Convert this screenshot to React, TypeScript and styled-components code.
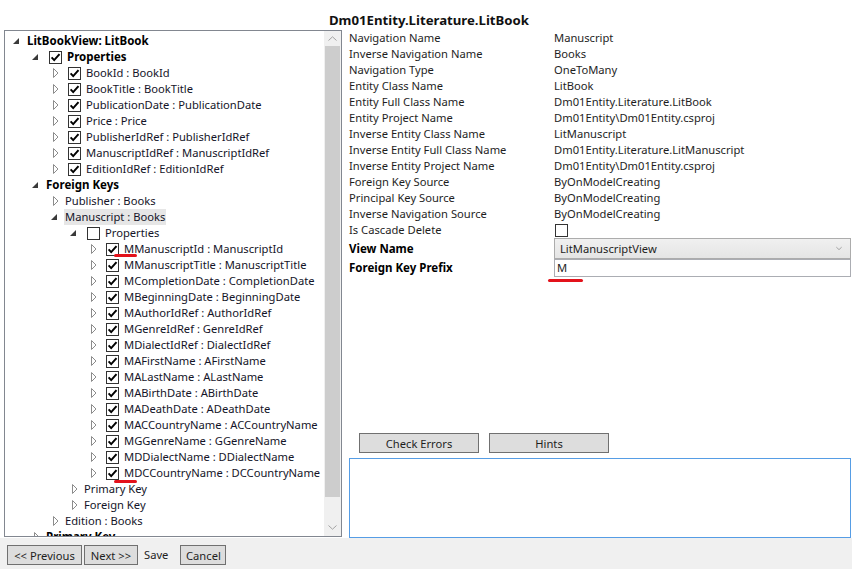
import React from 'react';
import styled, { createGlobalStyle } from 'styled-components';

const Global = createGlobalStyle`
  html, body { margin: 0; padding: 0; background: #ffffff; }
  body {
    font-family: "Noto Sans", "Open Sans", sans-serif;
    font-size: 11.2px;
    color: #1e1e1e;
  }
  * { box-sizing: border-box; }
`;

const Window = styled.div`
  width: 852px;
  height: 569px;
  display: flex;
  flex-direction: column;
  background: #ffffff;
  overflow: hidden;
`;

const Title = styled.div`
  height: 30px;
  padding-top: 11px;
  padding-left: 6px;
  line-height: 19px;
  text-align: center;
  font-weight: 700;
  font-size: 13.2px;
  color: #111;
`;

const Main = styled.div`
  display: flex;
  height: 508px;
`;

const TreeBox = styled.div`
  margin-left: 4px;
  width: 338px;
  height: 507px;
  border: 1px solid #828790;
  display: flex;
  background: #fff;
`;

const TreeContent = styled.div`
  flex: 1;
  overflow: hidden;
  padding-top: 2px;
`;

const Row = styled.div<{ $level: number }>`
  height: 16px;
  display: flex;
  align-items: center;
  padding-left: ${(p) => 5 + p.$level * 19}px;
  white-space: nowrap;
`;

const Expander = styled.div<{ $open: boolean }>`
  width: 17px;
  height: 16px;
  display: flex;
  align-items: center;
  padding-left: ${(p) => (p.$open ? 3 : 5)}px;
  flex-shrink: 0;
`;

const Check = styled.div`
  width: 13px;
  height: 13px;
  margin-left: 3px;
  margin-right: 5px;
  border: 1px solid #333333;
  background: #fff;
  flex-shrink: 0;
  display: flex;
  align-items: center;
  justify-content: center;
`;

const NodeText = styled.span<{ $bold?: boolean; $hl?: boolean }>`
  position: relative;
  font-weight: ${(p) => (p.$bold ? 700 : 400)};
  font-size: ${(p) => (p.$bold ? '11.5px' : '11.2px')};
  color: ${(p) => (p.$bold ? '#000' : '#141428')};
  background: ${(p) => (p.$hl ? '#e6e6e6' : 'transparent')};
  line-height: 16px;
  padding: 0 1px;
  margin-left: -1px;
`;

const RedMark = styled.span<{ $top: number; $left: number; $width: number }>`
  position: absolute;
  left: ${(p) => p.$left}px;
  top: ${(p) => p.$top}px;
  width: ${(p) => p.$width}px;
  height: 3px;
  border-radius: 2px;
  background: #e3121b;
`;

const ScrollBar = styled.div`
  width: 17px;
  background: #f0f0f0;
  display: flex;
  flex-direction: column;
  flex-shrink: 0;
`;

const ScrollArrow = styled.div<{ $h: number }>`
  height: ${(p) => p.$h}px;
  display: flex;
  align-items: center;
  justify-content: center;
`;

const Thumb = styled.div`
  height: 451px;
  margin: 0 1px;
  background: #cdcdcd;
`;

const Spacer = styled.div`
  flex: 1;
`;

const RightPanel = styled.div`
  flex: 1;
  display: flex;
  flex-direction: column;
  padding-left: 7px;
`;

const PropGrid = styled.div`
  display: grid;
  grid-template-columns: 205px 1fr;
  grid-auto-rows: 16px;
  align-items: center;
`;

const PropLabel = styled.div<{ $bold?: boolean }>`
  font-weight: ${(p) => (p.$bold ? 700 : 400)};
  font-size: ${(p) => (p.$bold ? '11.5px' : '11.2px')};
  color: ${(p) => (p.$bold ? '#000' : '#1e1e1e')};
  line-height: 16px;
  white-space: nowrap;
`;

const PropValue = styled.div`
  line-height: 16px;
  white-space: nowrap;
  color: #1e1e1e;
`;

const CascadeBox = styled.div`
  width: 13px;
  height: 13px;
  margin-left: 1px;
  border: 1px solid #333;
  background: #fff;
`;

const EditorGrid = styled.div`
  display: grid;
  grid-template-columns: 205px 1fr;
  grid-template-rows: 21px 18px;
  align-items: center;
`;

const Combo = styled.div`
  height: 21px;
  margin-top: -1px;
  margin-right: 1px;
  border: 1px solid #acacac;
  background: linear-gradient(#f0f0f0, #e5e5e5);
  display: flex;
  align-items: center;
  justify-content: space-between;
  padding: 0 8px 0 5px;
  color: #1e1e1e;
`;

const TextField = styled.div`
  position: relative;
  height: 18px;
  margin-right: 1px;
  border: 1px solid #abadb3;
  background: #fff;
  padding-left: 2px;
  line-height: 16px;
  color: #1e1e1e;
`;

const ButtonRow = styled.div`
  display: flex;
  gap: 10px;
  margin-left: 10px;
  margin-bottom: 5px;
`;

const WinButton = styled.button<{ $w: number }>`
  width: ${(p) => p.$w}px;
  height: 20px;
  padding: 0;
  border: 1px solid #707070;
  background: #dddddd;
  font-family: inherit;
  font-size: 11.2px;
  color: #1e1e1e;
  line-height: 17px;
`;

const OutputBox = styled.div`
  height: 80px;
  margin-right: 1px;
  border: 1px solid #569de5;
  background: #fff;
`;

const BottomBar = styled.div`
  height: 31px;
  background: #f0f0f0;
  display: flex;
  align-items: flex-start;
  padding: 7px 0 0 7px;
  gap: 2px;
`;

const SaveText = styled.span`
  line-height: 19px;
  margin: 0 10px 0 4px;
  color: #1e1e1e;
`;

type Node = {
  level: number;
  exp: 'open' | 'closed';
  check?: boolean;
  text: string;
  bold?: boolean;
  hl?: boolean;
  mark?: number;
};

const nodes: Node[] = [
  { level: 0, exp: 'open', text: 'LitBookView: LitBook', bold: true },
  { level: 1, exp: 'open', check: true, text: 'Properties', bold: true },
  { level: 2, exp: 'closed', check: true, text: 'BookId : BookId' },
  { level: 2, exp: 'closed', check: true, text: 'BookTitle : BookTitle' },
  { level: 2, exp: 'closed', check: true, text: 'PublicationDate : PublicationDate' },
  { level: 2, exp: 'closed', check: true, text: 'Price : Price' },
  { level: 2, exp: 'closed', check: true, text: 'PublisherIdRef : PublisherIdRef' },
  { level: 2, exp: 'closed', check: true, text: 'ManuscriptIdRef : ManuscriptIdRef' },
  { level: 2, exp: 'closed', check: true, text: 'EditionIdRef : EditionIdRef' },
  { level: 1, exp: 'open', text: 'Foreign Keys', bold: true },
  { level: 2, exp: 'closed', text: 'Publisher : Books' },
  { level: 2, exp: 'open', text: 'Manuscript : Books', hl: true },
  { level: 3, exp: 'open', check: false, text: 'Properties' },
  { level: 4, exp: 'closed', check: true, text: 'MManuscriptId : ManuscriptId', mark: 13 },
  { level: 4, exp: 'closed', check: true, text: 'MManuscriptTitle : ManuscriptTitle' },
  { level: 4, exp: 'closed', check: true, text: 'MCompletionDate : CompletionDate' },
  { level: 4, exp: 'closed', check: true, text: 'MBeginningDate : BeginningDate' },
  { level: 4, exp: 'closed', check: true, text: 'MAuthorIdRef : AuthorIdRef' },
  { level: 4, exp: 'closed', check: true, text: 'MGenreIdRef : GenreIdRef' },
  { level: 4, exp: 'closed', check: true, text: 'MDialectIdRef : DialectIdRef' },
  { level: 4, exp: 'closed', check: true, text: 'MAFirstName : AFirstName' },
  { level: 4, exp: 'closed', check: true, text: 'MALastName : ALastName' },
  { level: 4, exp: 'closed', check: true, text: 'MABirthDate : ABirthDate' },
  { level: 4, exp: 'closed', check: true, text: 'MADeathDate : ADeathDate' },
  { level: 4, exp: 'closed', check: true, text: 'MACCountryName : ACCountryName' },
  { level: 4, exp: 'closed', check: true, text: 'MGGenreName : GGenreName' },
  { level: 4, exp: 'closed', check: true, text: 'MDDialectName : DDialectName' },
  { level: 4, exp: 'closed', check: true, text: 'MDCCountryName : DCCountryName', mark: 15 },
  { level: 3, exp: 'closed', text: 'Primary Key' },
  { level: 3, exp: 'closed', text: 'Foreign Key' },
  { level: 2, exp: 'closed', text: 'Edition : Books' },
  { level: 1, exp: 'closed', text: 'Primary Key', bold: true },
];

const props: [string, string][] = [
  ['Navigation Name', 'Manuscript'],
  ['Inverse Navigation Name', 'Books'],
  ['Navigation Type', 'OneToMany'],
  ['Entity Class Name', 'LitBook'],
  ['Entity Full Class Name', 'Dm01Entity.Literature.LitBook'],
  ['Entity Project Name', 'Dm01Entity\\Dm01Entity.csproj'],
  ['Inverse Entity Class Name', 'LitManuscript'],
  ['Inverse Entity Full Class Name', 'Dm01Entity.Literature.LitManuscript'],
  ['Inverse Entity Project Name', 'Dm01Entity\\Dm01Entity.csproj'],
  ['Foreign Key Source', 'ByOnModelCreating'],
  ['Principal Key Source', 'ByOnModelCreating'],
  ['Inverse Navigation Source', 'ByOnModelCreating'],
];

const OpenArrow = () => (
  <svg width="6" height="6" viewBox="0 0 6 6">
    <path d="M6 0 L6 6 L0 6 Z" fill="#3a3a3a" />
  </svg>
);

const ClosedArrow = () => (
  <svg width="6" height="10" viewBox="0 0 6 10">
    <path d="M0.5 0.5 L0.5 9.5 L5 5 Z" fill="#fff" stroke="#8c8c8c" strokeWidth="1" />
  </svg>
);

const CheckMark = () => (
  <svg width="11" height="11" viewBox="0 0 11 11">
    <path d="M1.6 5.4 L4.2 8.1 L9.5 2.2" fill="none" stroke="#000" strokeWidth="2" />
  </svg>
);

const Chevron = ({ up, color, w = 9 }: { up?: boolean; color: string; w?: number }) => (
  <svg width={w} height="5" viewBox="0 0 9 5">
    <path d={up ? 'M0.5 4.5 L4.5 0.8 L8.5 4.5' : 'M0.5 0.5 L4.5 4.2 L8.5 0.5'} fill="none" stroke={color} strokeWidth="1" />
  </svg>
);

export default function App() {
  return (
    <Window>
      <Global />
      <Title>Dm01Entity.Literature.LitBook</Title>
      <Main>
        <TreeBox>
          <TreeContent>
            {nodes.map((n, i) => (
              <Row key={i} $level={n.level}>
                <Expander $open={n.exp === 'open'}>
                  {n.exp === 'open' ? <OpenArrow /> : <ClosedArrow />}
                </Expander>
                {n.check !== undefined && <Check>{n.check && <CheckMark />}</Check>}
                <NodeText $bold={n.bold} $hl={n.hl}>
                  {n.mark !== undefined && <RedMark $top={n.mark} $left={-9} $width={23} />}
                  {n.text}
                </NodeText>
              </Row>
            ))}
          </TreeContent>
          <ScrollBar>
            <ScrollArrow $h={15}>
              <Chevron up color="#a3a3a3" />
            </ScrollArrow>
            <Thumb />
            <Spacer />
            <ScrollArrow $h={17}>
              <Chevron color="#a3a3a3" />
            </ScrollArrow>
          </ScrollBar>
        </TreeBox>
        <RightPanel>
          <PropGrid>
            {props.map(([k, v]) => (
              <React.Fragment key={k}>
                <PropLabel>{k}</PropLabel>
                <PropValue>{v}</PropValue>
              </React.Fragment>
            ))}
            <PropLabel>Is Cascade Delete</PropLabel>
            <CascadeBox />
          </PropGrid>
          <EditorGrid>
            <PropLabel $bold>View Name</PropLabel>
            <Combo>
              <span>LitManuscriptView</span>
              <Chevron color="#808080" w={6} />
            </Combo>
            <PropLabel $bold>Foreign Key Prefix</PropLabel>
            <TextField>
              M
              <RedMark $top={19} $left={-7} $width={35} />
            </TextField>
          </EditorGrid>
          <Spacer />
          <ButtonRow>
            <WinButton $w={120}>Check Errors</WinButton>
            <WinButton $w={120}>Hints</WinButton>
          </ButtonRow>
          <OutputBox />
        </RightPanel>
      </Main>
      <BottomBar>
        <WinButton $w={75}>&lt;&lt; Previous</WinButton>
        <WinButton $w={54}>Next &gt;&gt;</WinButton>
        <SaveText>Save</SaveText>
        <WinButton $w={46}>Cancel</WinButton>
      </BottomBar>
    </Window>
  );
}
